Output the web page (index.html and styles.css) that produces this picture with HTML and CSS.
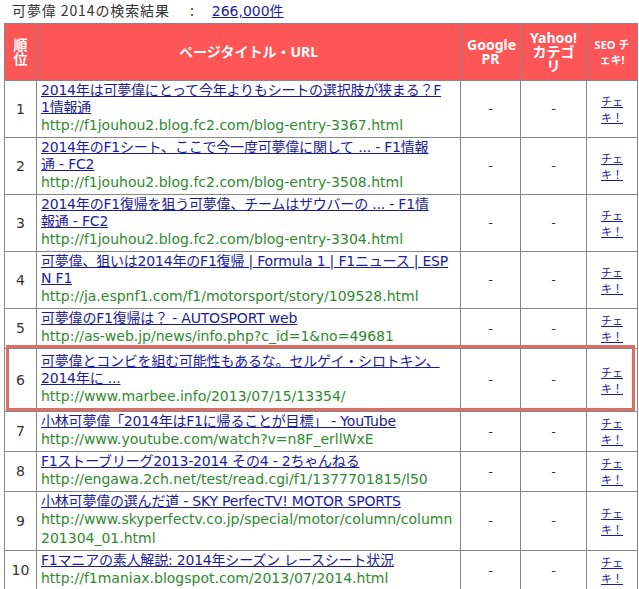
FILE: index.html
```html
<!DOCTYPE html>
<html lang="ja">
<head>
<meta charset="utf-8">
<title>可夢偉 2014の検索結果</title>
<link rel="stylesheet" href="styles.css">
</head>
<body>
<p class="summary">可夢偉 2014の検索結果<span class="sep">:</span><a class="count" href="#">266,000件</a></p>
<div class="results">
<table class="rank-table">
<colgroup>
<col class="c-rank"><col class="c-title"><col class="c-pr"><col class="c-cat"><col class="c-seo">
</colgroup>
<thead>
<tr>
<th>順位</th>
<th>ページタイトル・URL</th>
<th>Google PR</th>
<th>Yahoo! カテゴリ</th>
<th class="th-seo">SEO チェキ!</th>
</tr>
</thead>
<tbody>
<tr>
<td class="rank">1</td>
<td class="page"><a class="title" href="#">2014年は可夢偉にとって今年よりもシートの選択肢が狭まる？F<br>1情報通</a><span class="url">http://f1jouhou2.blog.fc2.com/blog-entry-3367.html</span></td>
<td class="val">-</td><td class="val">-</td>
<td class="seo"><a href="#">チェキ！</a></td>
</tr>
<tr>
<td class="rank">2</td>
<td class="page"><a class="title" href="#">2014年のF1シート、ここで今一度可夢偉に関して ... - F1情報<br>通 - FC2</a><span class="url">http://f1jouhou2.blog.fc2.com/blog-entry-3508.html</span></td>
<td class="val">-</td><td class="val">-</td>
<td class="seo"><a href="#">チェキ！</a></td>
</tr>
<tr>
<td class="rank">3</td>
<td class="page"><a class="title" href="#">2014年のF1復帰を狙う可夢偉、チームはザウバーの ... - F1情<br>報通 - FC2</a><span class="url">http://f1jouhou2.blog.fc2.com/blog-entry-3304.html</span></td>
<td class="val">-</td><td class="val">-</td>
<td class="seo"><a href="#">チェキ！</a></td>
</tr>
<tr>
<td class="rank">4</td>
<td class="page"><a class="title" href="#">可夢偉、狙いは2014年のF1復帰 | Formula 1 | F1ニュース | ESP<br>N F1</a><span class="url">http://ja.espnf1.com/f1/motorsport/story/109528.html</span></td>
<td class="val">-</td><td class="val">-</td>
<td class="seo"><a href="#">チェキ！</a></td>
</tr>
<tr>
<td class="rank">5</td>
<td class="page"><a class="title" href="#">可夢偉のF1復帰は？ - AUTOSPORT web</a><span class="url">http://as-web.jp/news/info.php?c_id=1&amp;no=49681</span></td>
<td class="val">-</td><td class="val">-</td>
<td class="seo"><a href="#">チェキ！</a></td>
</tr>
<tr class="marked">
<td class="rank">6</td>
<td class="page"><a class="title" href="#">可夢偉とコンビを組む可能性もあるな。セルゲイ・シロトキン、<br>2014年に ...</a><span class="url">http://www.marbee.info/2013/07/15/13354/</span></td>
<td class="val">-</td><td class="val">-</td>
<td class="seo"><a href="#">チェキ！</a></td>
</tr>
<tr>
<td class="rank">7</td>
<td class="page"><a class="title" href="#">小林可夢偉「2014年はF1に帰ることが目標」 - YouTube</a><span class="url">http://www.youtube.com/watch?v=n8F_erllWxE</span></td>
<td class="val">-</td><td class="val">-</td>
<td class="seo"><a href="#">チェキ！</a></td>
</tr>
<tr>
<td class="rank">8</td>
<td class="page"><a class="title" href="#">F1ストーブリーグ2013-2014 その4 - 2ちゃんねる</a><span class="url">http://engawa.2ch.net/test/read.cgi/f1/1377701815/l50</span></td>
<td class="val">-</td><td class="val">-</td>
<td class="seo"><a href="#">チェキ！</a></td>
</tr>
<tr>
<td class="rank">9</td>
<td class="page"><a class="title" href="#">小林可夢偉の選んだ道 - SKY PerfecTV! MOTOR SPORTS</a><span class="url">http://www.skyperfectv.co.jp/special/motor/column/column<br>201304_01.html</span></td>
<td class="val">-</td><td class="val">-</td>
<td class="seo"><a href="#">チェキ！</a></td>
</tr>
<tr>
<td class="rank">10</td>
<td class="page"><a class="title" href="#">F1マニアの素人解説: 2014年シーズン レースシート状況</a><span class="url">http://f1maniax.blogspot.com/2013/07/2014.html</span></td>
<td class="val">-</td><td class="val">-</td>
<td class="seo"><a href="#">チェキ！</a></td>
</tr>
</tbody>
</table>
<div class="highlight"></div>
</div>
</body>
</html>
```
FILE: styles.css
```css
html, body {
  margin: 0;
  padding: 0;
  background: #fff;
}
body {
  font-family: "DejaVu Sans", "Noto Sans CJK JP", sans-serif;
  font-size: 14px;
  color: #333;
}
.summary {
  margin: 0;
  padding: 2px 0 0 12px;
  height: 21px;
  line-height: 17px;
  font-family: "Noto Sans CJK JP", sans-serif;
  font-size: 14px;
  letter-spacing: 0.9px;
  color: #333;
}
.summary .sep {
  margin: 0 17px 0 20px;
}
.summary .count {
  font-family: "DejaVu Sans", "Noto Sans CJK JP", sans-serif;
  letter-spacing: 0;
  color: #1c1c9a;
}
.results {
  position: relative;
  margin-left: 4px;
  width: 633px;
}
.rank-table {
  width: 633px;
  table-layout: fixed;
  border-collapse: collapse;
  border: 1px solid #878787;
}
.c-rank { width: 32px; }
.c-title { width: 424px; }
.c-pr { width: 60px; }
.c-cat { width: 66px; }
.c-seo { width: 51px; }
.rank-table th {
  background: #fe5656;
  color: #fff;
  font-family: "Noto Sans", "Noto Sans CJK JP", sans-serif;
  font-weight: bold;
  font-size: 14px;
  line-height: 14px;
  padding: 7px 6px;
  border: 1px solid #878787;
  text-align: center;
  vertical-align: middle;
}
.rank-table th.th-seo {
  font-size: 11px;
  line-height: 15px;
  padding: 7px 4px;
}
.rank-table td {
  border: 1px solid #878787;
  padding: 1px 4px 2px;
  vertical-align: middle;
}
.rank {
  text-align: center;
  font-size: 14px;
}
.page {
  word-break: break-all;
}
.title {
  display: block;
  line-height: 17px;
  letter-spacing: -0.2px;
  color: #1c1c9a;
  font-family: "DejaVu Sans", "Noto Sans CJK JP", sans-serif;
}
.url {
  display: block;
  line-height: 19px;
  color: #2f8a2f;
}
.val {
  text-align: center;
  font-size: 13px;
}
.seo {
  text-align: center;
  font-family: "Noto Sans CJK JP", sans-serif;
  font-size: 11px;
  line-height: 16px;
}
.seo a {
  color: #1c1c9a;
}
.marked td {
  padding-top: 4px;
  padding-bottom: 5px;
}
.highlight {
  position: absolute;
  left: 2px;
  top: 322px;
  width: 623px;
  height: 60px;
  border: 3px solid #dc6e66;
  pointer-events: none;
}
```
